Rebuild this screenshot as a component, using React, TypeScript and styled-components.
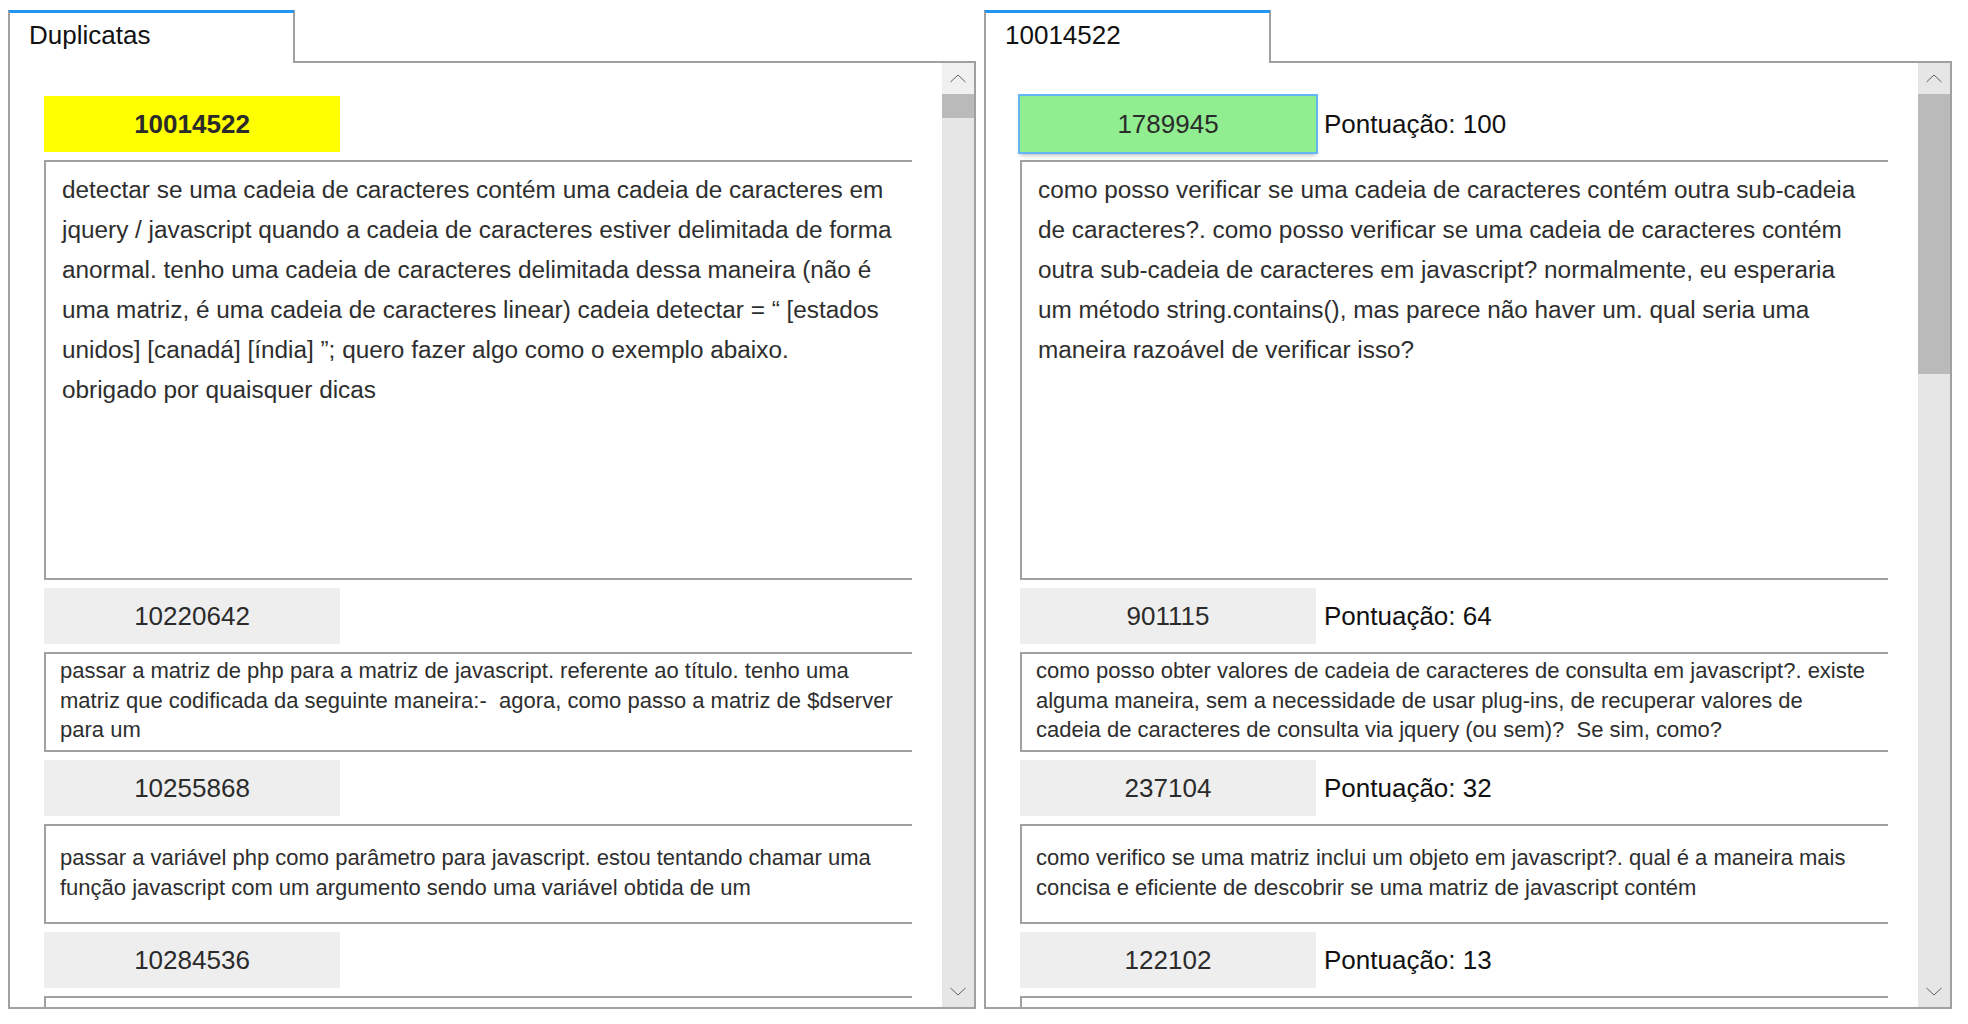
import React from "react";
import styled, { createGlobalStyle } from "styled-components";

const GlobalStyle = createGlobalStyle`
  html, body {
    margin: 0;
    padding: 0;
    background: #ffffff;
  }
  body {
    font-family: "Liberation Sans", Arial, sans-serif;
    color: #333333;
  }
`;

const Page = styled.div`
  display: flex;
  gap: 8px;
  padding: 10px 0 0 8px;
  height: 1024px;
  box-sizing: border-box;
  overflow: hidden;
`;

const Panel = styled.section`
  width: 968px;
  display: flex;
  flex-direction: column;
  flex-shrink: 0;
`;

const TabRow = styled.div`
  display: flex;
  height: 53px;
`;

const Tab = styled.div`
  width: 287px;
  box-sizing: border-box;
  border-top: 3px solid #2196f3;
  border-left: 2px solid #a0a0a0;
  border-right: 2px solid #a0a0a0;
  background: #ffffff;
  padding: 0 0 5px 19px;
  display: flex;
  align-items: center;
  font-size: 26px;
  color: #111111;
`;

const TabFiller = styled.div`
  flex: 1;
  border-bottom: 2px solid #a0a0a0;
`;

const Body = styled.div`
  height: 946px;
  box-sizing: border-box;
  border: 2px solid #a0a0a0;
  border-top: none;
  display: flex;
  overflow: hidden;
`;

const Content = styled.div`
  flex: 1;
  padding: 33px 30px 0 34px;
  display: flex;
  flex-direction: column;
  gap: 8px;
  overflow: hidden;
`;

const EntryHeader = styled.div`
  display: flex;
  align-items: center;
  gap: 8px;
  flex-shrink: 0;
`;

type IdVariant = "source" | "best" | "plain";

const idBg: Record<IdVariant, string> = {
  source: "#ffff00",
  best: "#90ee90",
  plain: "#eeeeee",
};

const IdBox = styled.div<{ $variant: IdVariant }>`
  width: 296px;
  height: 56px;
  flex-shrink: 0;
  display: flex;
  align-items: center;
  justify-content: center;
  font-size: 26px;
  color: #2b2b2b;
  background: ${(p) => idBg[p.$variant]};
  font-weight: ${(p) => (p.$variant === "source" ? 700 : 400)};
  outline: ${(p) => (p.$variant === "best" ? "2px solid #64b5f6" : "none")};
  box-shadow: ${(p) =>
    p.$variant === "best" ? "0 3px 4px rgba(0, 0, 0, 0.3)" : "none"};
`;

const Score = styled.span`
  font-size: 26px;
  color: #111111;
`;

const TextBox = styled.div<{ $large?: boolean }>`
  flex-shrink: 0;
  box-sizing: border-box;
  height: ${(p) => (p.$large ? "420px" : "100px")};
  border: 2px solid #a0a0a0;
  border-right: none;
  padding: ${(p) => (p.$large ? "8px 12px 0 16px" : "0 12px 3px 14px")};
  display: flex;
  align-items: ${(p) => (p.$large ? "flex-start" : "center")};
  overflow: hidden;
`;

const BoxText = styled.div<{ $large?: boolean }>`
  font-size: ${(p) => (p.$large ? "24.35px" : "22px")};
  line-height: ${(p) => (p.$large ? "40px" : "29.5px")};
  white-space: pre-wrap;
  color: #2e2e2e;
`;

const Scrollbar = styled.div`
  width: 32px;
  flex-shrink: 0;
  display: flex;
  flex-direction: column;
  background: #e6e6e6;
`;

const ScrollButton = styled.div<{ $light?: boolean }>`
  height: 31px;
  flex-shrink: 0;
  display: flex;
  align-items: center;
  justify-content: center;
  background: ${(p) => (p.$light ? "#f0f0f0" : "#e6e6e6")};
`;

const Thumb = styled.div`
  background: #bababa;
  flex-shrink: 0;
`;

const Track = styled.div`
  flex: 1;
`;

const Chevron = ({ down }: { down?: boolean }) => (
  <svg width="16" height="9" viewBox="0 0 16 9">
    <polyline
      points={down ? "0.5,1 8,8 15.5,1" : "0.5,8 8,1 15.5,8"}
      fill="none"
      stroke="#606060"
      strokeWidth="1"
    />
  </svg>
);

type Entry = {
  id: string;
  variant: IdVariant;
  score?: number;
  large?: boolean;
  lines: string[];
};

const leftEntries: Entry[] = [
  {
    id: "10014522",
    variant: "source",
    large: true,
    lines: [
      "detectar se uma cadeia de caracteres contém uma cadeia de caracteres em",
      "jquery / javascript quando a cadeia de caracteres estiver delimitada de forma",
      "anormal. tenho uma cadeia de caracteres delimitada dessa maneira (não é",
      "uma matriz, é uma cadeia de caracteres linear) cadeia detectar = “ [estados",
      "unidos] [canadá] [índia] ”; quero fazer algo como o exemplo abaixo.",
      "obrigado por quaisquer dicas",
    ],
  },
  {
    id: "10220642",
    variant: "plain",
    lines: [
      "passar a matriz de php para a matriz de javascript. referente ao título. tenho uma",
      "matriz que codificada da seguinte maneira:-  agora, como passo a matriz de $dserver",
      "para um",
    ],
  },
  {
    id: "10255868",
    variant: "plain",
    lines: [
      "passar a variável php como parâmetro para javascript. estou tentando chamar uma",
      "função javascript com um argumento sendo uma variável obtida de um",
    ],
  },
  {
    id: "10284536",
    variant: "plain",
    lines: [""],
  },
];

const rightEntries: Entry[] = [
  {
    id: "1789945",
    variant: "best",
    score: 100,
    large: true,
    lines: [
      "como posso verificar se uma cadeia de caracteres contém outra sub-cadeia",
      "de caracteres?. como posso verificar se uma cadeia de caracteres contém",
      "outra sub-cadeia de caracteres em javascript? normalmente, eu esperaria",
      "um método string.contains(), mas parece não haver um. qual seria uma",
      "maneira razoável de verificar isso?",
    ],
  },
  {
    id: "901115",
    variant: "plain",
    score: 64,
    lines: [
      "como posso obter valores de cadeia de caracteres de consulta em javascript?. existe",
      "alguma maneira, sem a necessidade de usar plug-ins, de recuperar valores de",
      "cadeia de caracteres de consulta via jquery (ou sem)?  Se sim, como?",
    ],
  },
  {
    id: "237104",
    variant: "plain",
    score: 32,
    lines: [
      "como verifico se uma matriz inclui um objeto em javascript?. qual é a maneira mais",
      "concisa e eficiente de descobrir se uma matriz de javascript contém",
    ],
  },
  {
    id: "122102",
    variant: "plain",
    score: 13,
    lines: [""],
  },
];

const EntryList = ({ entries }: { entries: Entry[] }) => (
  <>
    {entries.map((e) => (
      <React.Fragment key={e.id}>
        <EntryHeader>
          <IdBox $variant={e.variant}>{e.id}</IdBox>
          {e.score !== undefined && <Score>Pontuação: {e.score}</Score>}
        </EntryHeader>
        <TextBox $large={e.large}>
          <BoxText $large={e.large}>{e.lines.join("\n")}</BoxText>
        </TextBox>
      </React.Fragment>
    ))}
  </>
);

const FakeScrollbar = ({
  thumb,
  lightTop,
}: {
  thumb: number;
  lightTop?: boolean;
}) => (
  <Scrollbar>
    <ScrollButton $light={lightTop}>
      <Chevron />
    </ScrollButton>
    <Thumb style={{ height: thumb }} />
    <Track />
    <ScrollButton>
      <Chevron down />
    </ScrollButton>
  </Scrollbar>
);

const TabPanel = ({
  title,
  entries,
  thumb,
  lightTop,
}: {
  title: string;
  entries: Entry[];
  thumb: number;
  lightTop?: boolean;
}) => (
  <Panel>
    <TabRow>
      <Tab>{title}</Tab>
      <TabFiller />
    </TabRow>
    <Body>
      <Content>
        <EntryList entries={entries} />
      </Content>
      <FakeScrollbar thumb={thumb} lightTop={lightTop} />
    </Body>
  </Panel>
);

export default function App() {
  return (
    <>
      <GlobalStyle />
      <Page>
        <TabPanel
          title="Duplicatas"
          entries={leftEntries}
          thumb={24}
          lightTop
        />
        <TabPanel title="10014522" entries={rightEntries} thumb={280} />
      </Page>
    </>
  );
}
